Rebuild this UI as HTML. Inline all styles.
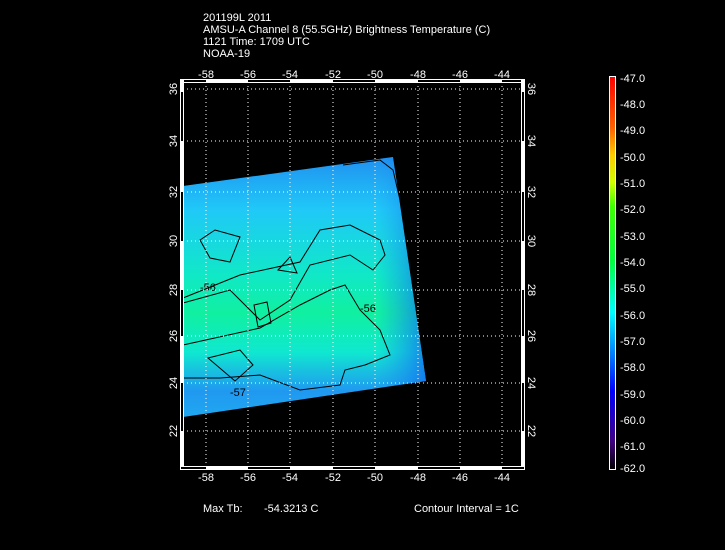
<!DOCTYPE html>
<html><head><style>
html,body{margin:0;padding:0;background:#000;}
svg{display:block;}
text{font-family:"Liberation Sans",sans-serif;fill:#fff;font-size:11px;}
</style></head><body>
<svg width="725" height="550" viewBox="0 0 725 550" xmlns="http://www.w3.org/2000/svg">
<defs>
<linearGradient id="cb" x1="0" y1="0" x2="0" y2="1">
<stop offset="0" stop-color="#ff0000"/>
<stop offset="0.13" stop-color="#ff6000"/>
<stop offset="0.2" stop-color="#ffcc00"/>
<stop offset="0.27" stop-color="#d0ff00"/>
<stop offset="0.33" stop-color="#40ff00"/>
<stop offset="0.47" stop-color="#00ff40"/>
<stop offset="0.6" stop-color="#00ffff"/>
<stop offset="0.73" stop-color="#0060ff"/>
<stop offset="0.8" stop-color="#0000ff"/>
<stop offset="0.93" stop-color="#400080"/>
<stop offset="1" stop-color="#000000"/>
</linearGradient>
<linearGradient id="dg" x1="0" y1="0" x2="0" y2="1">
<stop offset="0" stop-color="#2090f0"/>
<stop offset="0.2" stop-color="#20c8f8"/>
<stop offset="0.45" stop-color="#10e8c8"/>
<stop offset="0.6" stop-color="#10f0a0"/>
<stop offset="0.75" stop-color="#10e8d0"/>
<stop offset="0.9" stop-color="#2098f0"/>
<stop offset="1" stop-color="#20a8f0"/>
</linearGradient>
<linearGradient id="dh" x1="0" y1="0" x2="1" y2="0">
<stop offset="0" stop-color="#2090f0" stop-opacity="0"/>
<stop offset="0.8" stop-color="#2090f0" stop-opacity="0"/>
<stop offset="1" stop-color="#1070f0" stop-opacity="0.8"/>
</linearGradient>
</defs>
<text x="203" y="21">201199L 2011</text>
<text x="203" y="33">AMSU-A Channel 8 (55.5GHz) Brightness Temperature (C)</text>
<text x="203" y="45">1121 Time: 1709 UTC</text>
<text x="203" y="57">NOAA-19</text>

<polygon points="183,186 393,157 426,381 183,417" fill="url(#dg)"/>
<polygon points="183,186 393,157 426,381 183,417" fill="url(#dh)"/>
<g fill="none" stroke="#000" stroke-width="1">
<path d="M183,298 L240,275 L300,262 L320,230 L350,225 L380,240 L385,255 L373,270 L350,255 L310,265 L290,300 L260,320 L230,290 L183,303"/>
<path d="M200,240 L215,230 L240,237 L230,262 L210,258 Z"/>
<path d="M278,270 L290,257 L297,273 Z"/>
<path d="M183,345 L260,328 L300,305 L330,290 L345,285 L360,310 L380,330 L390,355 L365,365 L345,370 L340,385 L300,390 L260,375 L220,378 L183,378"/>
<path d="M254,305 L267,302 L271,323 L258,327 Z"/>
<path d="M208,358 L240,350 L253,365 L235,381 Z"/>
<path d="M343,165 L380,160 L393,170 L400,200"/>
</g>
<text x="200" y="291" font-size="10" style="fill:#000">-56</text>
<text x="360" y="312" font-size="10" style="fill:#000">-56</text>
<text x="230" y="396" font-size="10" style="fill:#000">-57</text>

<!-- grid -->
<g stroke="#fff" stroke-width="1" stroke-dasharray="1,3">
<line x1="206" y1="82" x2="206" y2="466"/><line x1="248" y1="82" x2="248" y2="466"/>
<line x1="290" y1="82" x2="290" y2="466"/><line x1="333" y1="82" x2="333" y2="466"/>
<line x1="375" y1="82" x2="375" y2="466"/><line x1="418" y1="82" x2="418" y2="466"/>
<line x1="460" y1="82" x2="460" y2="466"/><line x1="502" y1="82" x2="502" y2="466"/>
<line x1="183" y1="89" x2="521" y2="89"/><line x1="183" y1="141" x2="521" y2="141"/>
<line x1="183" y1="192" x2="521" y2="192"/><line x1="183" y1="241" x2="521" y2="241"/>
<line x1="183" y1="290" x2="521" y2="290"/><line x1="183" y1="336" x2="521" y2="336"/>
<line x1="183" y1="383" x2="521" y2="383"/><line x1="183" y1="431" x2="521" y2="431"/>
</g>
<!-- frame -->
<rect x="180.5" y="79.5" width="344" height="390" fill="none" stroke="#fff"/>
<rect x="183.5" y="82.5" width="338" height="384" fill="none" stroke="#fff"/>
<g fill="#fff">
<rect x="206" y="79" width="42" height="4"/><rect x="290" y="79" width="43" height="4"/><rect x="375" y="79" width="43" height="4"/><rect x="460" y="79" width="42" height="4"/>
<rect x="206" y="466" width="42" height="4"/><rect x="290" y="466" width="43" height="4"/><rect x="375" y="466" width="43" height="4"/><rect x="460" y="466" width="42" height="4"/>
<rect x="180" y="80" width="4" height="12"/><rect x="180" y="141" width="4" height="51"/><rect x="180" y="241" width="4" height="49"/><rect x="180" y="336" width="4" height="47"/><rect x="180" y="431" width="4" height="36"/>
<rect x="521" y="80" width="4" height="12"/><rect x="521" y="141" width="4" height="51"/><rect x="521" y="241" width="4" height="49"/><rect x="521" y="336" width="4" height="47"/><rect x="521" y="431" width="4" height="36"/>
</g>
<g font-size="11">
<g text-anchor="middle">
<text x="206" y="78">-58</text><text x="248" y="78">-56</text><text x="290" y="78">-54</text><text x="333" y="78">-52</text>
<text x="375" y="78">-50</text><text x="418" y="78">-48</text><text x="460" y="78">-46</text><text x="502" y="78">-44</text>
<text x="206" y="481">-58</text><text x="248" y="481">-56</text><text x="290" y="481">-54</text><text x="333" y="481">-52</text>
<text x="375" y="481">-50</text><text x="418" y="481">-48</text><text x="460" y="481">-46</text><text x="502" y="481">-44</text>
</g>
<g text-anchor="middle">
<text transform="translate(177,89) rotate(-90)">36</text><text transform="translate(177,141) rotate(-90)">34</text>
<text transform="translate(177,192) rotate(-90)">32</text><text transform="translate(177,241) rotate(-90)">30</text>
<text transform="translate(177,290) rotate(-90)">28</text><text transform="translate(177,336) rotate(-90)">26</text>
<text transform="translate(177,383) rotate(-90)">24</text><text transform="translate(177,431) rotate(-90)">22</text>
<text transform="translate(528,89) rotate(90)">36</text><text transform="translate(528,141) rotate(90)">34</text>
<text transform="translate(528,192) rotate(90)">32</text><text transform="translate(528,241) rotate(90)">30</text>
<text transform="translate(528,290) rotate(90)">28</text><text transform="translate(528,336) rotate(90)">26</text>
<text transform="translate(528,383) rotate(90)">24</text><text transform="translate(528,431) rotate(90)">22</text>
</g>
</g>
<text x="203" y="512">Max Tb:</text>
<text x="264" y="512">-54.3213   C</text>
<text x="414" y="512">Contour Interval = 1C</text>

<rect x="609.5" y="76.5" width="6" height="393" fill="url(#cb)" stroke="#fff"/>
<g font-size="11">
<text x="620" y="82">-47.0</text><text x="620" y="108">-48.0</text><text x="620" y="134">-49.0</text><text x="620" y="161">-50.0</text>
<text x="620" y="187">-51.0</text><text x="620" y="213">-52.0</text><text x="620" y="240">-53.0</text><text x="620" y="266">-54.0</text>
<text x="620" y="292">-55.0</text><text x="620" y="319">-56.0</text><text x="620" y="345">-57.0</text><text x="620" y="371">-58.0</text>
<text x="620" y="398">-59.0</text><text x="620" y="424">-60.0</text><text x="620" y="450">-61.0</text><text x="620" y="472">-62.0</text>
</g>
</svg>
</body></html>
